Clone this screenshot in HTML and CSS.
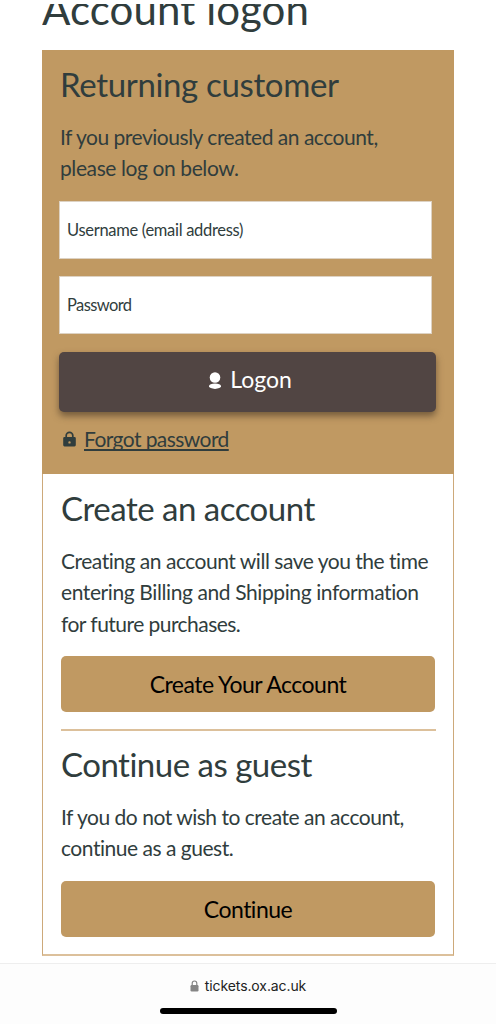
FILE: index.html
```html
<!DOCTYPE html>
<html lang="en">
<head>
<meta charset="utf-8">
<meta name="viewport" content="width=device-width">
<title>Account logon</title>
<link rel="stylesheet" href="styles.css">
</head>
<body>
<div class="viewport">
  <h1 class="title"><span>Account logon</span></h1>
  <main class="panel">
    <form class="returning">
      <h2 class="heading heading-returning">Returning customer</h2>
      <p class="copy">If you previously created an account,<br><span class="looser">please log on below.</span></p>
      <label class="field">Username (email address)</label>
      <label class="field field-password">Password</label>
      <button class="logon" type="button">
        <svg class="user" viewBox="0 0 12 17"><circle cx="6" cy="5.500" r="5.300"/><ellipse cx="6" cy="14.200" rx="6" ry="2.700"/></svg>
        <span>Logon</span>
      </button>
      <div class="forgot">
        <svg class="lock" viewBox="0 0 13 16"><path d="M3.2 7V4.6a3.3 3.3 0 0 1 6.6 0V7" fill="none" stroke="currentColor" stroke-width="1.7"/><path fill="currentColor" fill-rule="evenodd" d="M1.5 6h10q1.3 0 1.3 1.3v6.8q0 1.4-1.3 1.4h-10Q.2 15.500.2 14.100V7.300Q.2 6 1.500 6ZM6.500 10.200a1.200 1.200 0 1 0 0 2.400a1.200 1.200 0 0 0 0-2.400Z"/></svg>
        <a>Forgot password</a>
      </div>
    </form>
    <section class="create">
      <h2 class="heading">Create an account</h2>
      <p class="copy">Creating an account will save you the time<br><span class="looser">entering Billing and Shipping information</span><br><span class="tighter">for future purchases.</span></p>
      <button class="action" type="button">Create Your Account</button>
    </section>
    <section class="guest">
      <h2 class="heading">Continue as guest</h2>
      <p class="copy">If you do not wish to create an account,<br>continue as a guest.</p>
      <button class="action" type="button">Continue</button>
    </section>
  </main>
  <footer class="browser">
    <div class="address">
      <svg class="tiny-lock" viewBox="0 0 9 12"><path d="M2.200 6V3.300a2.300 2.300 0 0 1 4.600 0V6" fill="none" stroke="#858585" stroke-width="1.200"/><rect x=".5" y="5" width="8" height="6.500" rx="1.200" fill="#858585"/></svg>
      <span>tickets.ox.ac.uk</span>
    </div>
    <div class="home"></div>
  </footer>
</div>
</body>
</html>
```
FILE: styles.css
```css
* { box-sizing: border-box; }
body { margin: 0; background: #fff; color: #303d3d; font-family: Lato, "Open Sans", sans-serif; font-variant-ligatures: none; }
.viewport { height: 1024px; overflow: hidden; border-top: 4px solid #fff; display: flex; flex-direction: column; }
.title { margin: 0 0 0 42px; height: 46px; overflow: hidden; flex: none; font-size: 42px; font-weight: 400; line-height: 50px; letter-spacing: .1px; white-space: nowrap; }
.title span { display: block; margin-top: -20px; }
.panel { flex: none; width: 412px; height: 906px; margin-left: 42px; border: 1px solid #cda97a; border-bottom: 2px solid #dcc09b; white-space: nowrap; }
.returning { height: 424px; margin: -1px -1px 0; padding: 13px 18px 0; background: #c09962; }
.heading { margin: 0; font-size: 33px; font-weight: 400; line-height: 42px; letter-spacing: -.5px; }
.heading-returning { letter-spacing: -.35px; }
.copy { margin: 0; padding-top: 16px; font-size: 21px; line-height: 31.300px; letter-spacing: -.48px; }
.looser { letter-spacing: -.4px; }
.tighter { letter-spacing: -.54px; }
.field { display: flex; align-items: center; width: 373px; height: 58px; margin: 17px 0 0 -1px; padding: 0 7px; background: #fff; border: 1px solid #ddd2c3; font-size: 16.500px; letter-spacing: -.3px; }
.field-password { letter-spacing: -.6px; }
.logon { display: flex; align-items: center; justify-content: center; gap: 9px; width: 377px; height: 60px; margin: 18px 0 0 -1px; padding: 0 0 5px 6px; border: 0; border-radius: 5px; background: #514543; color: #fff; box-shadow: 0 4px 7px rgba(65,50,35,.6); font-family: inherit; font-size: 23px; }
.user { flex: none; width: 12px; height: 17px; margin-top: 3px; fill: #fff; }
.forgot { display: flex; align-items: center; gap: 8px; height: 30px; margin-top: 12px; padding-left: 3px; font-size: 21px; letter-spacing: -.57px; }
.forgot a { text-decoration: underline; text-decoration-thickness: 1.500px; text-underline-offset: 2px; text-decoration-skip-ink: none; }
.lock { width: 13px; height: 16px; }
.create { padding: 13px 18px 0; }
.guest { margin: 17px 17px 0 18px; border-top: 2px solid #dcc09b; padding-top: 12px; }
.action { display: flex; align-items: center; justify-content: center; width: 374px; height: 56px; margin-top: 17px; padding: 0; border: 0; border-radius: 5px; background: #c09962; color: #000; font-family: inherit; font-size: 23px; letter-spacing: -.5px; }
.guest .action { margin-top: 18px; }
.browser { flex: none; height: 61px; margin-top: 7px; border-top: 1px solid #eee; background: #fdfdfd; display: flex; flex-direction: column; align-items: center; }
.address { display: flex; align-items: center; gap: 6px; height: 18px; margin-top: 13px; color: #222; font: 14px/18px Inter, sans-serif; letter-spacing: -.1px; }
.tiny-lock { width: 9px; height: 12px; }
.home { width: 177px; height: 6px; margin-top: 13px; border-radius: 3px; background: #000; }
```
